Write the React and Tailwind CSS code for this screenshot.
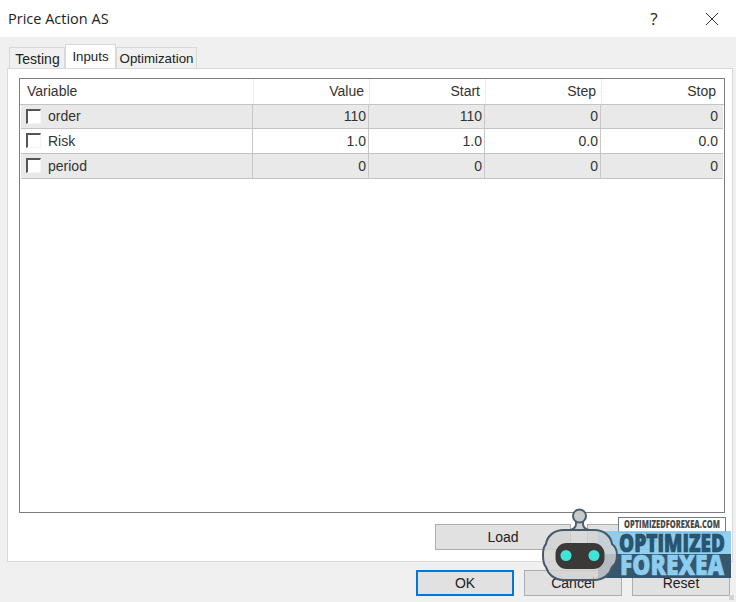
import React from 'react';

const ROWS = [
  { name: 'order', value: '110', start: '110', step: '0', stop: '0', shaded: true, height: 'h-[24px]' },
  { name: 'Risk', value: '1.0', start: '1.0', step: '0.0', stop: '0.0', shaded: false, height: 'h-[25px]' },
  { name: 'period', value: '0', start: '0', step: '0', stop: '0', shaded: true, height: 'h-[25px]' },
];

function Checkbox() {
  return <span className="block -mt-[1px] w-[15px] h-[15px] bg-white border-t-2 border-l-2 border-t-[#555555] border-l-[#555555] border-r border-b border-r-[#f4f4f4] border-b-[#f4f4f4]" />;
}

function HeaderCell({ children, last }) {
  return (
    <div className={`flex items-center justify-end ${last ? 'pr-[6px]' : 'pr-[5px] border-r border-[#ececec]'}`}>
      {children}
    </div>
  );
}

function Cell({ children, last }) {
  return (
    <div className={`flex items-center justify-end ${last ? 'pr-[3px]' : 'pr-[2px] border-r border-[#c8c8c8]'}`}>
      {children}
    </div>
  );
}

function Button({ children, className }) {
  return (
    <div className={`h-[26px] flex items-center justify-center bg-[#e1e1e1] border text-[14px] text-[#222222] ${className}`}>
      {children}
    </div>
  );
}

function Watermark() {
  return (
    <svg className="absolute left-[540px] top-[505px]" width="196" height="97" viewBox="540 505 196 97">
      <rect x="618.5" y="517.5" width="107" height="15" fill="#ffffff" stroke="#6b7f8c" />
      <text x="624" y="528" textLength="96" lengthAdjust="spacingAndGlyphs" fontFamily="'Open Sans', sans-serif" fontWeight="800" fontSize="10" fill="#4a4a4a">OPTIMIZEDFOREXEA.COM</text>
      <rect x="598" y="531" width="133" height="24" fill="#85c8ee" fillOpacity="0.88" />
      <rect x="598" y="554" width="133" height="24" fill="#264a62" fillOpacity="0.92" />
      <text x="619" y="552" textLength="106" lengthAdjust="spacingAndGlyphs" fontFamily="'Open Sans', sans-serif" fontWeight="800" fontSize="24" fill="#1d4a64" stroke="#1d4a64" strokeWidth="0.7" fillOpacity="0.92">OPTIMIZED</text>
      <text x="620" y="575" textLength="104" lengthAdjust="spacingAndGlyphs" fontFamily="'Open Sans', sans-serif" fontWeight="800" fontSize="28" fill="#8ccdf0" stroke="#8ccdf0" strokeWidth="0.7">FOREXEA</text>
      <path d="M576 520 V524 C576 527 574 529 570 530 H589 C585 529 583 527 583 524 V520 Z" fill="#cfcfcf" stroke="#4a5f6e" strokeWidth="2" />
      <circle cx="579.5" cy="516" r="6.5" fill="#c9c9c9" stroke="#4a5f6e" strokeWidth="2" />
      <path d="M564 530 H594 C605 530 611 537 612 544 C616 547 617 551 617 555 C617 559 616 564 612 567 C610 574 604 580 594 580 H564 C554 580 548 574 546 567 C543 564 543 559 543 555 C543 551 543 547 546 544 C547 537 553 530 564 530 Z" fill="#d2d2d2" fillOpacity="0.82" stroke="#46596a" strokeWidth="2" />
      <rect x="555.5" y="543" width="49" height="26" rx="11" fill="#3b3838" />
      <circle cx="566" cy="555.5" r="5.5" fill="#3fe3d8" />
      <circle cx="594" cy="555.5" r="5.5" fill="#3fe3d8" />
    </svg>
  );
}

export default function App() {
  return (
    <div className="relative w-[736px] h-[602px] overflow-hidden bg-[#f0f0f0] font-['Liberation_Sans',Arial,sans-serif] text-[14px] text-[#222222]">
      {/* Title bar */}
      <div className="h-[37px] bg-white flex items-center pl-2">
        <span className="font-['Open_Sans',sans-serif] text-[14.5px] text-[#222222] flex-1">Price Action AS</span>
        <span className="font-['Open_Sans',sans-serif] text-[17px] w-[14px] text-center mr-[44px]">?</span>
        <svg className="mr-[17px]" width="14" height="14" viewBox="0 0 14 14" fill="none" stroke="#333333" strokeWidth="1">
          <path d="M1 1 L13 13 M13 1 L1 13" />
        </svg>
      </div>

      {/* Tabs */}
      <div className="h-[31px] pl-[9px] flex items-end">
        <div className="w-[56px] h-[21px] flex items-center justify-center pl-[1px] bg-[#f0f0f0] border border-b-0 border-[#d9d9d9] text-[14px] pt-[2px]">Testing</div>
        <div className="w-[51px] h-[24px] flex items-start justify-center pt-[2px] bg-white border border-b-0 border-[#d9d9d9] text-[13.3px]">Inputs</div>
        <div className="w-[81px] h-[21px] flex items-center justify-center bg-[#f0f0f0] border border-b-0 border-[#d9d9d9] text-[13.3px] pt-[2px]">Optimization</div>
      </div>

      {/* Panel */}
      <div className="ml-[7px] w-[726px] h-[494px] bg-white border border-[#d9d9d9] pt-[9px] pl-[11px] flex flex-col">
        <div className="w-[706px] h-[435px] border border-[#7d7d7d] text-[#333333]">
          <div className="h-[26px] grid grid-cols-[234px_116px_116px_116px_120px] border-b border-[#c4c4c4]">
            <div className="flex items-center pl-[7px] border-r border-[#ececec]">Variable</div>
            <HeaderCell>Value</HeaderCell>
            <HeaderCell>Start</HeaderCell>
            <HeaderCell>Step</HeaderCell>
            <HeaderCell last>Stop</HeaderCell>
          </div>
          {ROWS.map((row) => (
            <div
              key={row.name}
              className={`${row.height} ml-[1px] mr-[1px] grid grid-cols-[232px_116px_116px_116px_120px] border-b border-[#c4c4c4] ${row.shaded ? 'bg-[#e9e9e9]' : 'bg-white'}`}
            >
              <div className="flex items-center pl-[5px] gap-[7px] border-r border-[#c8c8c8]">
                <Checkbox />
                <span>{row.name}</span>
              </div>
              <Cell>{row.value}</Cell>
              <Cell>{row.start}</Cell>
              <Cell>{row.step}</Cell>
              <Cell last>{row.stop}</Cell>
            </div>
          ))}
        </div>
        <div className="mt-[11px] pl-[416px] flex gap-[16px]">
          <Button className="w-[136px] border-[#adadad]">Load</Button>
          <Button className="w-[136px] border-[#adadad]">Save</Button>
        </div>
      </div>

      {/* Dialog buttons */}
      <div className="mt-[8px] pl-[416px] flex gap-[10px]">
        <Button className="w-[98px] border-2 border-[#0078d7]">OK</Button>
        <Button className="w-[98px] border-[#adadad]">Cancel</Button>
        <Button className="w-[98px] border-[#adadad]">Reset</Button>
      </div>

      {/* Resize grip */}
      <div className="absolute right-[2px] bottom-[2px] w-[5px] h-[5px] bg-[#d4d4d4]" />

      <Watermark />
    </div>
  );
}
